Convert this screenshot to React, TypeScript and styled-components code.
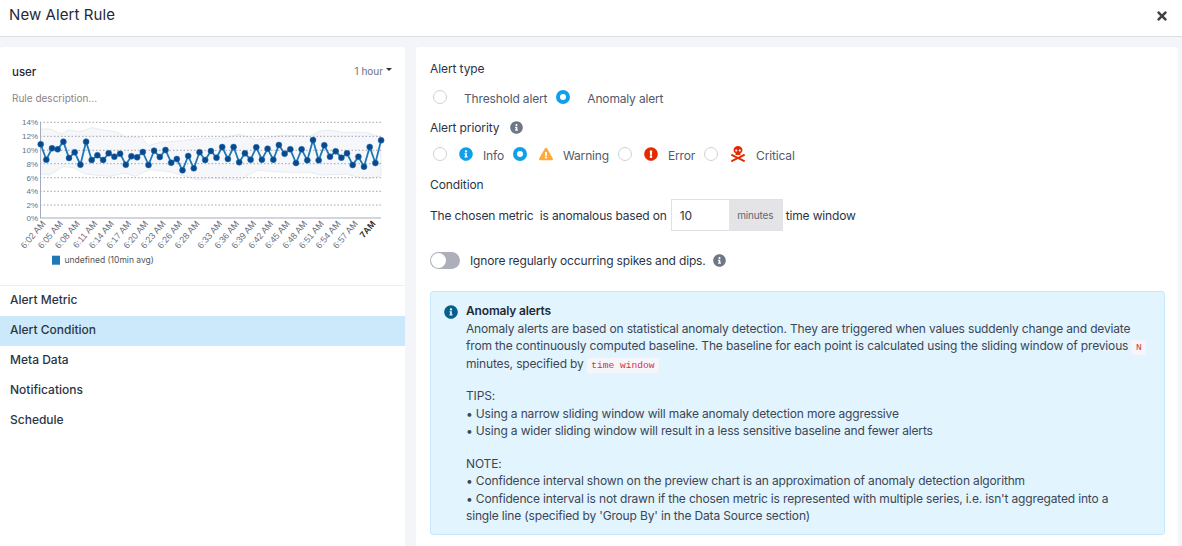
import React from "react";
import styled, { createGlobalStyle } from "styled-components";
import {
  FaExclamationCircle,
  FaExclamationTriangle,
  FaInfoCircle,
  FaSkullCrossbones,
  FaTimes,
} from "react-icons/fa";

const GlobalStyle = createGlobalStyle`
  html, body {
    margin: 0;
    height: 100%;
    overflow: hidden;
    background: #f4f5f8;
    font-family: Inter, "Liberation Sans", sans-serif;
    color: #20293a;
  }
  * { box-sizing: border-box; }
`;

const Page = styled.div`
  height: 546px;
  display: flex;
  flex-direction: column;
`;
const Header = styled.header`
  height: 37px;
  flex: none;
  background: #fff;
  border-bottom: 1px solid #dcdde1;
  display: flex;
  align-items: center;
  justify-content: space-between;
  padding: 0 13px 7px 9px;
`;
const Title = styled.h1`
  margin: 0;
  font-size: 15px;
  font-weight: 400;
  letter-spacing: 0.08px;
  color: #1f2937;
`;
const Close = styled.span`
  display: flex;
  color: #444;
  font-size: 14px;
  margin-top: 2px;
`;
const Body = styled.div`
  flex: 1;
  min-height: 0;
  display: flex;
  gap: 11px;
  padding: 10px 4px 0 0;
`;
const LeftPanel = styled.aside`
  width: 405px;
  flex: none;
  background: #fff;
  border-radius: 3px 3px 0 0;
`;
const RightPanel = styled.main`
  flex: 1;
  background: #fff;
  border-radius: 3px 3px 0 0;
  padding: 13px 13px 0 14px;
`;
const RuleHead = styled.div`
  display: flex;
  justify-content: space-between;
  align-items: center;
  padding: 17px 13px 0 12px;
  height: 33px;
`;
const RuleName = styled.span`
  font-size: 11.5px;
  font-weight: 500;
  color: #1f2937;
`;
const Range = styled.span`
  font-size: 10px;
  color: #6b7280;
  display: flex;
  align-items: center;
  gap: 3px;
  margin-top: -3px;
  &::after {
    content: "";
    border-left: 3px solid transparent;
    border-right: 3px solid transparent;
    border-top: 3px solid #333;
    margin-bottom: 2px;
  }
`;
const RuleDescription = styled.div`
  font-size: 10px;
  color: #8d8387;
  padding: 12px 12px 0;
  height: 30px;
`;
const ChartFrame = styled.svg`
  display: block;
  width: 405px;
  height: 165px;
`;
const Nav = styled.nav`
  margin-top: 10px;
  border-top: 1px solid #eceef2;
`;
const NavItem = styled.div<{ $active?: boolean }>`
  height: 30px;
  padding: 0 0 4px 10px;
  display: flex;
  align-items: center;
  font-size: 12px;
  font-weight: 500;
  color: #2b3445;
  background: ${(p) => (p.$active ? "#cce9fb" : "transparent")};
`;
const Label = styled.div<{ $top?: number }>`
  font-size: 12px;
  letter-spacing: -0.1px;
  color: #2b3445;
  display: flex;
  align-items: center;
  gap: 11px;
  height: 16px;
  margin-top: ${(p) => p.$top ?? 0}px;
`;
const RadioRow = styled.div<{ $top: number; $gap: number; $height: number }>`
  display: flex;
  align-items: center;
  padding-left: 3px;
  margin-top: ${(p) => p.$top}px;
  height: ${(p) => p.$height}px;
  gap: ${(p) => p.$gap}px;
`;
const Option = styled.label<{ $gap: number }>`
  display: flex;
  align-items: center;
  gap: ${(p) => p.$gap}px;
  font-size: 12px;
  letter-spacing: -0.16px;
  color: #525a6b;
`;
const Radio = styled.span<{ $checked?: boolean }>`
  width: 14px;
  height: 14px;
  border-radius: 50%;
  flex: none;
  background: #fff;
  border: ${(p) => (p.$checked ? "4.5px solid #0ea0ea" : "1px solid #ced1d8")};
  margin-top: -2px;
`;
const IconSlot = styled.span<{ $color: string; $size?: number }>`
  display: flex;
  color: ${(p) => p.$color};
  font-size: ${(p) => p.$size ?? 14}px;
  margin: -2px -1px 0 1px;
`;
const ConditionRow = styled.div`
  display: flex;
  align-items: center;
  font-size: 12px;
  letter-spacing: -0.16px;
  color: #2b3445;
  margin-top: 7px;
  height: 32px;
`;
const InputGroup = styled.div`
  display: flex;
  height: 32px;
  margin: 0 3px 0 4px;
`;
const NumberInput = styled.div`
  width: 58px;
  border: 1px solid #dfe1e6;
  border-right: 0;
  background: #fff;
  display: flex;
  align-items: center;
  padding-left: 8px;
`;
const Addon = styled.div`
  width: 54px;
  background: #e4e4e6;
  border: 1px solid #dfe1e6;
  border-left: 0;
  display: flex;
  align-items: center;
  justify-content: center;
  font-size: 10px;
  color: #5f6675;
`;
const ToggleRow = styled.div`
  display: flex;
  align-items: center;
  margin-top: 21px;
  height: 16px;
  font-size: 12px;
  letter-spacing: -0.16px;
  color: #2b3445;
`;
const Toggle = styled.span`
  width: 30px;
  height: 17px;
  border-radius: 9px;
  background: #adb0b9;
  padding: 1px;
  margin-right: 10px;
  display: flex;
  &::before {
    content: "";
    width: 15px;
    height: 15px;
    border-radius: 50%;
    background: #fff;
  }
`;
const Hint = styled.span<{ $offset?: number }>`
  display: flex;
  color: #6f7787;
  font-size: 13px;
  margin-left: ${(p) => p.$offset ?? 0}px;
`;
const InfoBox = styled.section`
  margin-top: 23px;
  height: 244px;
  width: 735px;
  background: #e2f4fd;
  border: 1px solid #c5e8fa;
  border-radius: 3px;
  display: flex;
  gap: 8px;
  padding: 10px 14px 0 13px;
`;
const InfoIcon = styled.span`
  display: flex;
  color: #075f8c;
  font-size: 14px;
  margin-top: 3px;
  flex: none;
`;
const InfoText = styled.div`
  font-size: 12px;
  letter-spacing: -0.16px;
  line-height: 17.5px;
  color: #3c4656;
  white-space: nowrap;
`;
const InfoTitle = styled.div`
  font-weight: 600;
  color: #1f2937;
`;
const Gap = styled.div`
  height: 15px;
`;
const Code = styled.code`
  font-family: "Liberation Mono", "DejaVu Sans Mono", monospace;
  font-size: 9.6px;
  line-height: 1;
  letter-spacing: 0;
  color: #d1344b;
  background: #f6f5f9;
  padding: 2px 4.5px;
  border-radius: 2px;
`;

const series = [
  286, 332, 298, 301, 278, 327, 310, 347, 278, 333, 319, 333, 313, 323, 314,
  347, 322, 325, 309, 348, 305, 324, 303, 341, 330, 364, 321, 358, 310, 333,
  306, 326, 294, 330, 294, 340, 313, 332, 295, 332, 299, 332, 288, 314, 301,
  342, 301, 334, 273, 334, 289, 323, 307, 326, 313, 348, 323, 353, 294, 342,
  274,
];
const upper = [
  [122, 240], [150, 240], [185, 255], [205, 243], [240, 248], [275, 236],
  [310, 243], [355, 250], [375, 265], [425, 265], [445, 290], [480, 280],
  [550, 275], [600, 268], [660, 268], [720, 256], [770, 272], [850, 258],
  [930, 262], [960, 246], [990, 243], [1030, 250], [1100, 250], [1143, 265],
];
const lower = [
  [122, 375], [150, 378], [190, 352], [220, 356], [255, 375], [330, 382],
  [375, 372], [405, 382], [430, 370], [450, 362], [510, 368], [590, 392],
  [640, 388], [720, 392], [770, 364], [860, 370], [930, 370], [960, 378],
  [1040, 376], [1100, 390], [1143, 380],
];
const grid = [
  ["14%", 220], ["12%", 262], ["10%", 304], ["8%", 344],
  ["6%", 386], ["4%", 427], ["2%", 468], ["0%", 507],
] as const;
const ticks = [
  ["6:02 AM", 135], ["6:05 AM", 187], ["6:08 AM", 238], ["6:11 AM", 290],
  ["6:14 AM", 340], ["6:17 AM", 392], ["6:20 AM", 443], ["6:23 AM", 495],
  ["6:26 AM", 545], ["6:28 AM", 597], ["6:33 AM", 665], ["6:36 AM", 716],
  ["6:39 AM", 767], ["6:42 AM", 818], ["6:45 AM", 868], ["6:48 AM", 920],
  ["6:51 AM", 970], ["6:54 AM", 1020], ["6:57 AM", 1072], ["7AM", 1125],
] as const;

// coordinates above were read off a 3x crop starting at y=50
const px = (x: number) => +(x / 3).toFixed(1);
const py = (y: number) => +(y / 3 - 61).toFixed(1);
const linePoints = series.map((y, i) => [px(122 + i * 17.02), py(y)]);
const bandPoints = [...upper, ...[...lower].reverse()]
  .map(([x, y]) => `${px(x)},${py(y)}`)
  .join(" ");

function Chart() {
  return (
    <ChartFrame viewBox="0 0 405 165">
      <polygon points={bandPoints} fill="#f5f7fa" stroke="#e8ecf1" strokeWidth="1" />
      {grid.map(([label, y]) => (
        <g key={label}>
          <line
            x1="40"
            x2="381"
            y1={py(y)}
            y2={py(y)}
            stroke={label === "0%" ? "#a9a9bd" : "#a4a4ad"}
            strokeDasharray={label === "0%" ? undefined : "1.5 2"}
          />
          <text
            x="38"
            y={py(y) + 3}
            textAnchor="end"
            fontSize="8"
            fill="#6a7080"
            fontFamily="'Liberation Sans', sans-serif"
          >
            {label}
          </text>
        </g>
      ))}
      <line x1="40.5" x2="40.5" y1={py(220)} y2={py(507)} stroke="#a9a9bd" />
      <polyline
        points={linePoints.map((p) => p.join(",")).join(" ")}
        fill="none"
        stroke="#1f77b4"
        strokeWidth="1.8"
      />
      {linePoints.map(([x, y], i) => (
        <circle key={i} cx={x} cy={y} r="3" fill="#0a478c" stroke="#1f77b4" strokeWidth="0.5" />
      ))}
      {ticks.map(([label, x]) => (
        <text
          key={label}
          transform={`translate(${px(x) + 1} ${py(525)}) rotate(-50)`}
          textAnchor="end"
          fontSize="9"
          fill={label === "7AM" ? "#333" : "#6a7080"}
          fontWeight={label === "7AM" ? 700 : 400}
          fontFamily="'Liberation Sans', sans-serif"
        >
          {label}
        </text>
      ))}
      <rect x="52" y={py(620)} width="8" height="9" fill="#1f77b4" />
      <text
        x="64.5"
        y={py(642)}
        fontSize="8.5"
        fill="#555"
        fontFamily="Inter, sans-serif"
      >
        undefined (10min avg)
      </text>
    </ChartFrame>
  );
}

const navItems = ["Alert Metric", "Alert Condition", "Meta Data", "Notifications", "Schedule"];

export default function App() {
  return (
    <Page>
      <GlobalStyle />
      <Header>
        <Title>New Alert Rule</Title>
        <Close>
          <FaTimes />
        </Close>
      </Header>
      <Body>
        <LeftPanel>
          <RuleHead>
            <RuleName>user</RuleName>
            <Range>1 hour</Range>
          </RuleHead>
          <RuleDescription>Rule description...</RuleDescription>
          <Chart />
          <Nav>
            {navItems.map((item) => (
              <NavItem key={item} $active={item === "Alert Condition"}>
                {item}
              </NavItem>
            ))}
          </Nav>
        </LeftPanel>
        <RightPanel>
          <Label>Alert type</Label>
          <RadioRow $top={13} $gap={9} $height={18}>
            <Option $gap={17}>
              <Radio />
              Threshold alert
            </Option>
            <Option $gap={17}>
              <Radio $checked />
              Anomaly alert
            </Option>
          </RadioRow>
          <Label $top={12}>
            Alert priority
            <Hint>
              <FaInfoCircle />
            </Hint>
          </Label>
          <RadioRow $top={9} $gap={9} $height={22}>
            <Option $gap={11}>
              <Radio />
              <IconSlot $color="#0ea0ea">
                <FaInfoCircle />
              </IconSlot>
              Info
            </Option>
            <Option $gap={11}>
              <Radio $checked />
              <IconSlot $color="#ffa93a">
                <FaExclamationTriangle />
              </IconSlot>
              Warning
            </Option>
            <Option $gap={11}>
              <Radio />
              <IconSlot $color="#e52a00">
                <FaExclamationCircle />
              </IconSlot>
              Error
            </Option>
            <Option $gap={11}>
              <Radio />
              <IconSlot $color="#e52a00" $size={16}>
                <FaSkullCrossbones />
              </IconSlot>
              Critical
            </Option>
          </RadioRow>
          <Label $top={10}>Condition</Label>
          <ConditionRow>
            <span>The chosen metric&nbsp; is anomalous based on</span>
            <InputGroup>
              <NumberInput>10</NumberInput>
              <Addon>minutes</Addon>
            </InputGroup>
            time window
          </ConditionRow>
          <ToggleRow>
            <Toggle />
            Ignore regularly occurring spikes and dips.
            <Hint $offset={7}>
              <FaInfoCircle />
            </Hint>
          </ToggleRow>
          <InfoBox>
            <InfoIcon>
              <FaInfoCircle />
            </InfoIcon>
            <InfoText>
              <InfoTitle>Anomaly alerts</InfoTitle>
              Anomaly alerts are based on statistical anomaly detection. They are triggered when values suddenly change and deviate
              <br />
              from the continuously computed baseline. The baseline for each point is calculated using the sliding window of previous <Code>N</Code>
              <br />
              minutes, specified by <Code>time window</Code>
              <Gap />
              <div>TIPS:</div>
              <div>• Using a narrow sliding window will make anomaly detection more aggressive</div>
              <div>• Using a wider sliding window will result in a less sensitive baseline and fewer alerts</div>
              <Gap />
              <div>NOTE:</div>
              <div>• Confidence interval shown on the preview chart is an approximation of anomaly detection algorithm</div>
              <div>• Confidence interval is not drawn if the chosen metric is represented with multiple series, i.e. isn't aggregated into a</div>
              <div>single line (specified by 'Group By' in the Data Source section)</div>
            </InfoText>
          </InfoBox>
        </RightPanel>
      </Body>
    </Page>
  );
}
